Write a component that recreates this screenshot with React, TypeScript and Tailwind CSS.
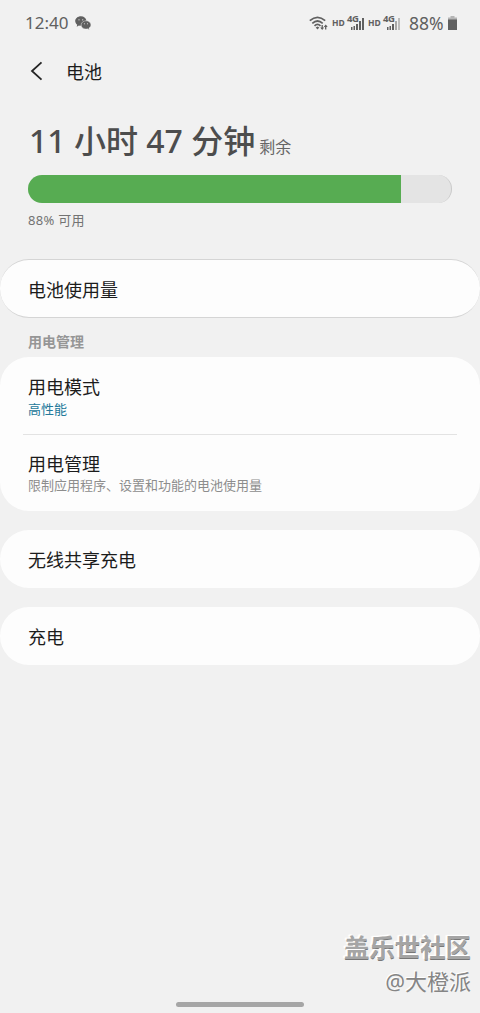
import type { ReactNode } from "react";

function Chat() {
  return (
    <svg width="16" height="14" viewBox="0 0 16 14" className="ml-[7px]">
      <path d="M6 .3C2.600.3.2 2.500.2 5.100c0 1.500.8 2.800 2 3.700l-.5 1.900 2.200-1.100c.6.2 1.200.2 1.900.2C6 7 8 5 11.400 4.500 10.900 2 8.800.3 6 .3Z" fill="#606060" />
      <path d="M15.900 8.900c0-2.200-2.200-4.100-4.900-4.100S6.100 6.700 6.100 8.900 8.300 13 11 13c.5 0 1-.1 1.500-.2l1.800.9-.4-1.600c1.200-.8 2-1.900 2-3.200Z" fill="#606060" stroke="#f1f1f1" strokeWidth=".4" />
      <g fill="#f1f1f1">
        <circle cx="4" cy="3.800" r=".6" /><circle cx="7.700" cy="3.800" r=".6" />
        <circle cx="9.400" cy="7.700" r=".5" /><circle cx="12.500" cy="7.700" r=".5" />
      </g>
    </svg>
  );
}

function Wifi() {
  return (
    <svg width="19" height="15" viewBox="0 0 19 15" fill="none" stroke="#606060">
      <path d="M.8 4.700Q8.500-2 16.200 4.700" strokeWidth="1.700" />
      <path d="M3.300 7.300Q8.500 2.700 13.700 7.300" strokeWidth="1.700" />
      <path d="M5.500 9.800Q8.500 7 11.500 9.800" strokeWidth="1.700" />
      <path d="m6.700 11.500 1.800-1 1.800 1-1.800 1.900Z" fill="#606060" stroke="none" />
      <path d="M13.200 9v4M16.700 13.500v-4" strokeWidth="1.300" />
      <path d="m11.200 11.500 2 2.500 2-2.500ZM14.700 11l2-2.500 2 2.500Z" fill="#606060" stroke="none" />
    </svg>
  );
}

function Signal({ weak = false }: { weak?: boolean }) {
  return (
    <span className="relative block h-[16px] w-[17px]">
      <svg width="17" height="16" viewBox="0 0 17 16" fill="#606060">
        <path d="M3 12h1.500v3H3zM5.500 11H7v4H5.500zM8 9h2v6H8z" />
        <path d="M11 6h2v9h-2z" fill={weak ? "#a8a8a8" : "#606060"} />
        <path d="M14 3h2v12h-2z" fill={weak ? "#bdbdbd" : "#606060"} />
      </svg>
      <span className="absolute -left-px -top-[2px] text-[9.500px] font-bold leading-[12px] tracking-[-0.4px]">4G</span>
    </span>
  );
}

function StatusBar() {
  return (
    <div className="flex h-[46px] items-center pl-[25px] pr-[23px] text-[17px] text-[#606060]">
      <span>12:40</span>
      <Chat />
      <div className="ml-auto flex items-center">
        <Wifi />
        <span className="ml-[4px] w-[12px] text-[8.500px] font-bold leading-[14px]">HD</span>
        <span className="ml-[4px]"><Signal /></span>
        <span className="ml-[3px] w-[12px] text-[8.500px] font-bold leading-[14px]">HD</span>
        <span className="ml-[4px]"><Signal weak /></span>
        <span className="ml-[8px] w-[36px] whitespace-nowrap text-[17.500px]">88%</span>
        <svg width="9" height="14" viewBox="0 0 9 14" className="ml-[3px]">
          <path d="M2.500 0h4v1.500H9V4H0V1.500h2.500z" fill="#b5b5b5" />
          <path d="M0 3.500h9V14H0z" fill="#606060" />
        </svg>
      </div>
    </div>
  );
}

function Card({ children, className }: { children: ReactNode; className: string }) {
  return <section className={`flex flex-col rounded-[29px] bg-[#fdfdfd] px-7 ${className}`}>{children}</section>;
}

function Title({ children }: { children: ReactNode }) {
  return <div className="pt-px text-[18px] leading-[26px] text-[#1c1c1c]">{children}</div>;
}

export default function App() {
  return (
    <main className="flex h-[1013px] w-[480px] flex-col overflow-hidden bg-[#f1f1f1] font-['Noto_Sans','Noto_Sans_CJK_SC',sans-serif]">
      <StatusBar />
      <header className="flex h-[50px] items-center pl-[30px] text-[18px] text-[#1c1c1c]">
        <svg width="13" height="20" viewBox="0 0 13 20" fill="none" stroke="#252525" strokeWidth="1.800">
          <path d="M11.500 1.300 2 10l9.500 8.700" />
        </svg>
        <h1 className="ml-[23px] pt-[2px]">电池</h1>
      </header>
      <div className="flex h-[79px] items-baseline pl-[29px] pr-7 pt-[21px] leading-[48px]">
        <span className="text-[32px] font-medium text-[#4d4d4d]">11 小时 47 分钟</span>
        <span className="ml-[4px] text-[16px] text-[#666]">剩余</span>
      </div>
      <div className="mx-7 h-[28px] shrink-0 overflow-hidden rounded-full border-r border-[#c9c9c9] bg-[#e4e4e4]">
        <div className="h-full w-[373px] bg-[#57ac52]" />
      </div>
      <div className="h-[56px] px-7 pt-[7px] text-[13px] leading-[20px] tracking-[0.3px] text-[#737373]">88% 可用</div>

      <Card className="h-[59px] justify-center border-y border-[#d5d5d5]">
        <div className="pt-[2px]"><Title>电池使用量</Title></div>
      </Card>
      <h2 className="h-[39px] px-7 pt-[13px] text-[14px] font-semibold leading-[22px] text-[#969696]">用电管理</h2>
      <Card className="h-[154px]">
        <div className="h-[77px] pt-[16px]">
          <Title>用电模式</Title>
          <p className="text-[13px] leading-[18px] text-[#24799a]">高性能</p>
        </div>
        <div className="-mx-[5px] h-[77px] border-t border-[#e3e3e3] px-[5px] pt-[15px]">
          <Title>用电管理</Title>
          <p className="text-[13px] leading-[17px] text-[#8d8d8d]">限制应用程序、设置和功能的电池使用量</p>
        </div>
      </Card>
      <Card className="mt-[19px] h-[58px] justify-center"><Title>无线共享充电</Title></Card>
      <Card className="mt-[19px] h-[58px] justify-center"><Title>充电</Title></Card>

      <footer className="mt-auto flex h-[84px] flex-col items-end pr-[9px]">
        <div className="text-[25.400px] font-bold leading-[36px] text-[#a5a5a5] [text-shadow:-1px_-1px_1px_#fff,-2px_-1px_1px_#fff,0_1px_0_#777]">盖乐世社区</div>
        <div className="text-[22px] leading-[32px] text-[#858585] [text-shadow:-1px_-1px_0_#fff]">@大橙派</div>
        <div className="mt-[5px] h-[5px] w-[128px] translate-x-[4px] self-center rounded-full bg-[#a6a6a6]" />
      </footer>
    </main>
  );
}
